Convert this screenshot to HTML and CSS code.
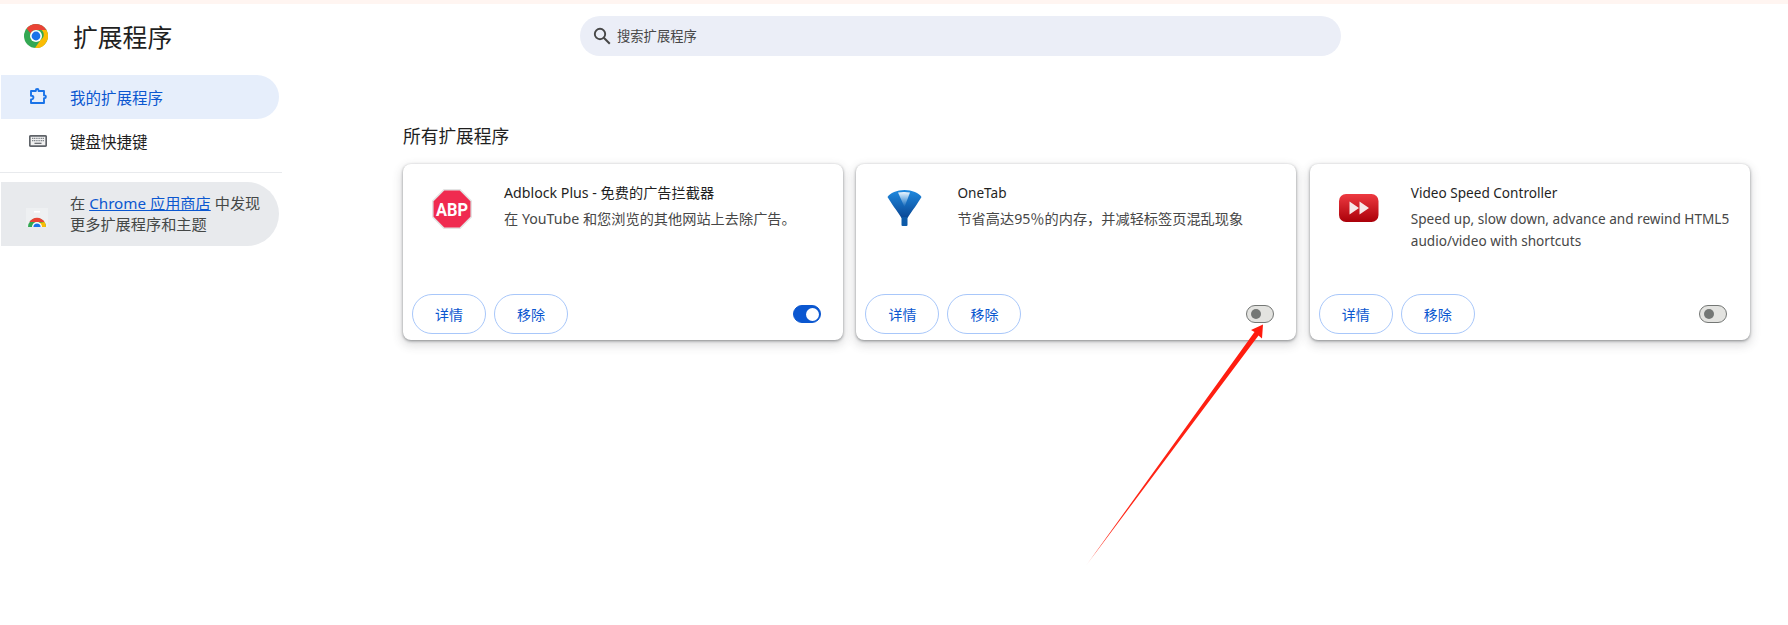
FILE: index.html
```html
<!DOCTYPE html>
<html lang="zh-CN">

<head>
  <meta charset="UTF-8">
  <title>扩展程序</title>
  <link rel="stylesheet" href="styles.css">
</head>

<body>
  <div class="top-strip"></div>
  <div class="page">
    <aside class="sidebar">
      <div class="brand">
        <svg class="brand-logo" viewBox="0 0 24 24">
          <circle cx="12" cy="12" r="12" fill="#34a853"/>
          <path d="M12 0a12 12 0 0 1 10.400 6H12a6 6 0 0 0-5.400 3.400L2.600 4.600A12 12 0 0 1 12 0z" fill="#ea4335"/>
          <path d="M22.400 6A12 12 0 0 1 11 24l5.500-8a6 6 0 0 0 1-10z" fill="#fbbc04"/>
          <circle cx="12" cy="12" r="6" fill="#fff"/>
          <circle cx="12" cy="12" r="4.400" fill="#1a73e8"/>
        </svg>
        <h1>扩展程序</h1>
      </div>
      <nav>
        <a class="nav-item active">
          <svg class="nav-icon" viewBox="0 0 18 18">
            <path d="M2 4h4.800v-.6a1.400 1.400 0 0 1 2.800 0V4H15v4.400h.5a1.400 1.400 0 0 1 0 2.800H15V16H2v-3.600h.6a1.800 1.800 0 0 0 0-3.600H2z" fill="none" stroke="#1a73e8" stroke-width="1.900" stroke-linejoin="round"/>
          </svg>
          我的扩展程序
        </a>
        <a class="nav-item">
          <svg class="nav-icon" viewBox="0 0 18 18">
            <rect x="0.800" y="4.800" width="16.400" height="10.400" rx="1" fill="#f1f1f1" stroke="#5f6368" stroke-width="1.700"/>
            <path d="M3 7.400h12M3 9.600h12" stroke="#80868b" stroke-width="1.200" stroke-dasharray="1.200 .6"/>
            <path d="M5.500 12.300h7" stroke="#5f6368" stroke-width="1.200"/>
          </svg>
          键盘快捷键
        </a>
      </nav>
      <hr class="divider">
      <div class="promo">
        <svg class="promo-icon" viewBox="0 0 22 20">
          <rect x="0" y="0" width="22" height="20" fill="#eef0f2"/>
          <rect x="8" y="3" width="6" height="1.500" fill="#fff"/>
          <path d="M2 19a9 9 0 0 1 18 0z" fill="#34a853"/>
          <path d="M3.400 14a9 9 0 0 1 15.200 0H11z" fill="#ea4335"/>
          <path d="M18.600 14A9 9 0 0 1 20 19h-5a4 4 0 0 0-2-4z" fill="#fbbc04"/>
          <circle cx="11" cy="19" r="5" fill="#fff"/>
          <circle cx="11" cy="19" r="3.600" fill="#1a73e8"/>
          <rect x="0" y="19" width="22" height="1" fill="#e8eaed"/>
        </svg>
        <p>在 <a href="#">Chrome 应用商店</a> 中发现<br>更多扩展程序和主题</p>
      </div>
    </aside>

    <main class="content">
      <div class="search">
        <svg class="search-icon" viewBox="0 0 18 18">
          <circle cx="7" cy="7" r="5.200" fill="none" stroke="#474747" stroke-width="1.900"/>
          <path d="M10.800 10.800l6 6" stroke="#474747" stroke-width="2"/>
        </svg>
        <span>搜索扩展程序</span>
      </div>

      <h2>所有扩展程序</h2>
      <div class="cards">
        <div class="card">
          <div class="card-top">
            <svg class="ext-icon" viewBox="0 0 40 40">
              <path d="M12 .8h16L39.200 12v16L28 39.200H12L.8 28V12z" fill="#f02b50" stroke="#e3e3e3" stroke-width="1.500"/>
              <text x="20" y="26.500" textLength="32" lengthAdjust="spacingAndGlyphs" class="abp-text">ABP</text>
            </svg>
            <div>
              <div class="ext-name">Adblock Plus - 免费的广告拦截器</div>
              <div class="ext-desc">在 YouTube 和您浏览的其他网站上去除广告。</div>
            </div>
          </div>
          <div class="card-bottom">
            <button>详情</button>
            <button>移除</button>
            <span class="toggle on"></span>
          </div>
        </div>

        <div class="card">
          <div class="card-top">
            <svg class="ext-icon" viewBox="0 0 40 40">
              <defs>
                <linearGradient id="funnelCone" x1="0" y1="0" x2="0" y2="1">
                  <stop offset="0" stop-color="#1f8ae0"/>
                  <stop offset="1" stop-color="#0a4794"/>
                </linearGradient>
                <linearGradient id="funnelShine" x1="0" y1="0" x2="0" y2="1">
                  <stop offset="0" stop-color="#eef6fd"/>
                  <stop offset="1" stop-color="#bfe0f8" stop-opacity="0"/>
                </linearGradient>
              </defs>
              <path d="M2.500 8C5 4 12 1 19.500 1S34 4 36.500 8C33 14 27 22 22.500 29H16.500C12 22 6 14 2.500 8z" fill="url(#funnelCone)"/>
              <path d="M13 3.500Q19 2.500 25 3.500L19.500 18z" fill="url(#funnelShine)"/>
              <rect x="16.500" y="28" width="6" height="9" rx="1" fill="#0d5aa8"/>
            </svg>
            <div>
              <div class="ext-name latin">OneTab</div>
              <div class="ext-desc">节省高达95％的内存，并减轻标签页混乱现象</div>
            </div>
          </div>
          <div class="card-bottom">
            <button>详情</button>
            <button>移除</button>
            <span class="toggle"></span>
          </div>
        </div>

        <div class="card">
          <div class="card-top">
            <svg class="ext-icon" viewBox="0 0 40 40">
              <defs>
                <linearGradient id="vsc" x1="0" y1="0" x2="0" y2="1">
                  <stop offset="0" stop-color="#ee3a41"/>
                  <stop offset="1" stop-color="#aa0009"/>
                </linearGradient>
              </defs>
              <rect x="0" y="5" width="39.500" height="28" rx="7" fill="url(#vsc)"/>
              <path d="M10.500 12.500l9.500 6.500-9.500 6.500zM20.500 12.500l9.500 6.500-9.500 6.500z" fill="#f6e9e9"/>
            </svg>
            <div>
              <div class="ext-name latin">Video Speed Controller</div>
              <div class="ext-desc latin">Speed up, slow down, advance and rewind HTML5 audio/video with shortcuts</div>
            </div>
          </div>
          <div class="card-bottom">
            <button>详情</button>
            <button>移除</button>
            <span class="toggle"></span>
          </div>
        </div>
      </div>
    </main>
  </div>

  <!-- red arrow drawn over the page -->
  <svg class="arrow" viewBox="0 0 200 260">
    <defs>
      <linearGradient id="arrowFade" x1="1" y1="0" x2="0" y2="1">
        <stop offset="0" stop-color="#ff1a0d"/>
        <stop offset="0.950" stop-color="#ff2a1a"/>
        <stop offset="1" stop-color="#ffc8c0"/>
      </linearGradient>
    </defs>
    <path d="M177 4.500L176 18.500L172.500 15.500L0.500 245L168.500 12L165 10z" fill="url(#arrowFade)"/>
  </svg>
</body>

</html>
```

FILE: styles.css
```css
body {
  margin: 0;
  width: 1788px;
  height: 625px;
  overflow: hidden;
  background-color: #fff;
  color: #1f1f1f;
  font-family: "Noto Sans", "Noto Sans CJK SC", sans-serif;
  font-size: 14px;
  position: relative;
}

.top-strip {
  height: 4px;
  background-color: #fff5f1;
}

.page {
  display: flex;
}

.sidebar {
  width: 282px;
  flex-shrink: 0;
}

.brand {
  display: flex;
  align-items: center;
  height: 56px;
  padding: 6px 0 0 24px;
}

.brand-logo {
  width: 24px;
  height: 24px;
  margin-right: 25px;
  margin-top: -5px;
}

.brand h1 {
  margin: -2px 0 0 0;
  font-size: 24.800px;
  font-weight: 400;
  line-height: 32px;
}

nav {
  margin-top: 9px;
}

.nav-item {
  display: flex;
  align-items: center;
  height: 44px;
  box-sizing: border-box;
  margin: 0 3px 0 1px;
  padding: 1px 0 0 28px;
  border-radius: 0 22px 22px 0;
  font-size: 15.500px;
}

.nav-item.active {
  background-color: #e6eefb;
  color: #0b57d0;
}

.nav-icon {
  width: 18px;
  height: 18px;
  margin-right: 23px;
  margin-top: -3px;
}

.divider {
  border: none;
  border-top: 1px solid #e8eaed;
  margin: 9px 0 9px 0;
}

.promo {
  display: flex;
  align-items: center;
  height: 64px;
  margin: 0 3px 0 1px;
  padding-left: 25px;
  background-color: #e8eaed;
  border-radius: 0 32px 32px 0;
  color: #444746;
}

.promo-icon {
  width: 22px;
  height: 20px;
  margin-right: 22px;
  margin-top: 8px;
}

.promo p {
  margin: 0;
  font-size: 15.200px;
  line-height: 21px;
}

.promo a {
  color: #0b57d0;
}

.content {
  flex: 1;
  padding-left: 121px;
}

.search {
  display: flex;
  align-items: center;
  width: 761px;
  height: 40px;
  margin: 12px 0 0 177px;
  padding-left: 13px;
  box-sizing: border-box;
  background-color: #ebeef7;
  border-radius: 20px;
  color: #474747;
  font-size: 13.300px;
}

.search span {
  margin-bottom: 2px;
}

.search-icon {
  width: 18px;
  height: 18px;
  margin-right: 6px;
}

h2 {
  margin: 66px 0 14px 0;
  font-size: 17.700px;
  font-weight: 400;
  line-height: 28px;
}

.cards {
  display: grid;
  grid-template-columns: repeat(3, 440px);
  gap: 13.400px;
}

.card {
  display: flex;
  flex-direction: column;
  justify-content: space-between;
  height: 176px;
  box-sizing: border-box;
  padding: 17px 22.500px 6px 9px;
  background-color: #fff;
  border-radius: 8px;
  box-shadow: 0 1px 3px rgba(60, 64, 67, 0.55), 0 4px 10px 2px rgba(60, 64, 67, 0.16);
}

.card-top {
  display: flex;
  margin-right: -8px;
}

.ext-icon {
  width: 40px;
  height: 40px;
  flex-shrink: 0;
  margin: 8px 32px 0 20px;
}

.ext-name {
  line-height: 24px;
  font-size: 14.200px;
  color: #1f1f1f;
}

.ext-desc {
  margin-top: 3px;
  font-size: 14.200px;
  line-height: 22px;
  color: #474747;
}

.ext-name.latin,
.ext-desc.latin {
  font-size: 13.600px;
}

.abp-text {
  font-family: Roboto, sans-serif;
  font-size: 18px;
  font-weight: 700;
  fill: #fff;
  text-anchor: middle;
}

.card-bottom {
  display: flex;
  align-items: center;
  gap: 8px;
}

.card-bottom button {
  width: 74px;
  height: 40px;
  padding: 0;
  background-color: #fff;
  border: 1px solid #a8c7fa;
  border-radius: 20px;
  color: #0b57d0;
  font-family: inherit;
  font-size: 14px;
}

.toggle {
  position: relative;
  width: 28px;
  height: 18px;
  margin-left: auto;
  box-sizing: border-box;
  background-color: #e3e3e0;
  border: 1px solid #747775;
  border-radius: 9px;
}

.toggle::after {
  content: "";
  position: absolute;
  left: 4px;
  top: 3px;
  width: 10px;
  height: 10px;
  border-radius: 50%;
  background-color: #747775;
}

.toggle.on {
  background-color: #0b57d0;
  border-color: #0b57d0;
}

.toggle.on::after {
  left: 12px;
  top: 1.500px;
  width: 13px;
  height: 13px;
  background-color: #fff;
}

.arrow {
  position: absolute;
  left: 1086px;
  top: 320px;
  width: 200px;
  height: 260px;
}
```
